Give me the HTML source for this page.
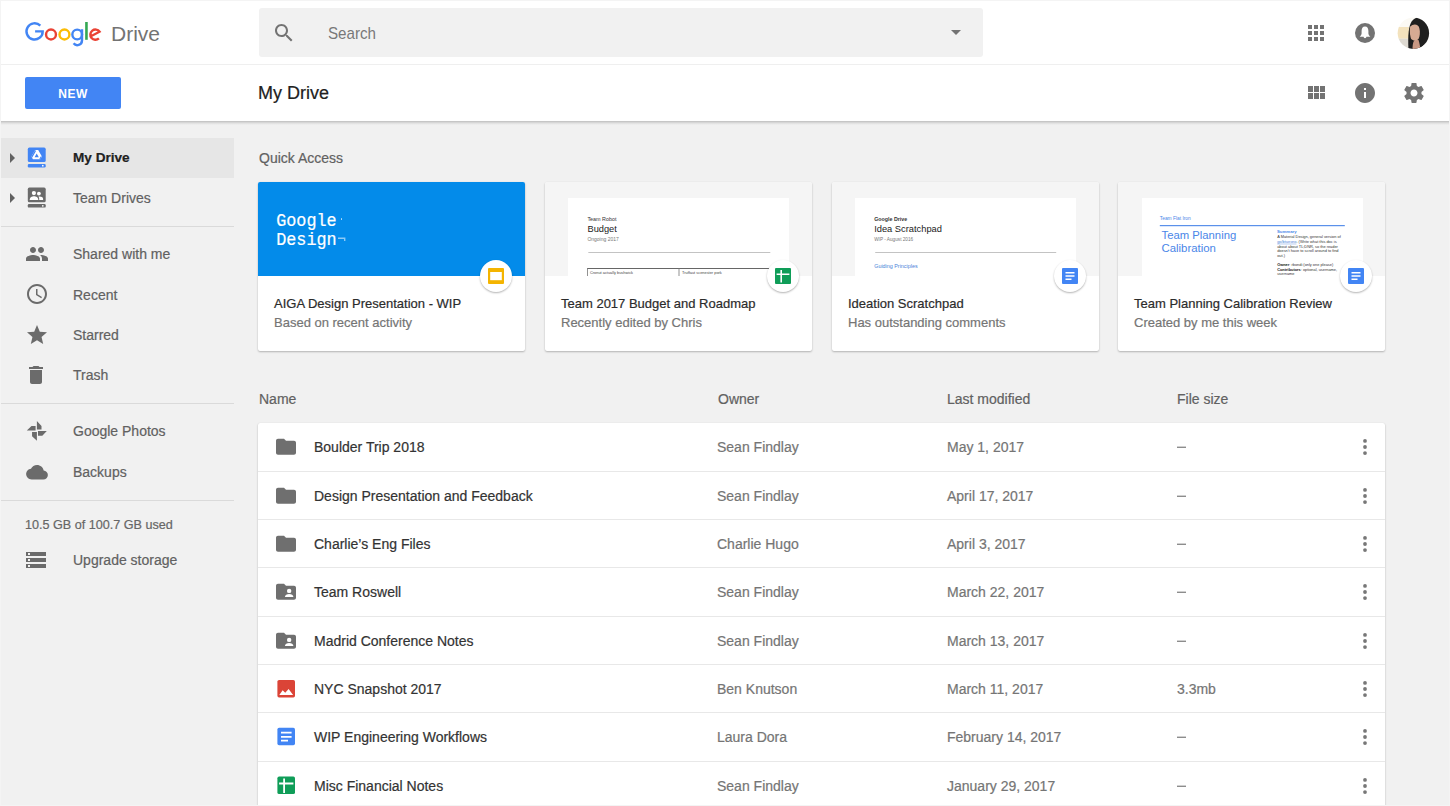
<!DOCTYPE html>
<html><head><meta charset="utf-8">
<style>
*{box-sizing:border-box;margin:0;padding:0}
html,body{width:1450px;height:806px;overflow:hidden}
body{position:relative;background:#f1f1f1;font-family:"Liberation Sans",sans-serif;color:#212121}
.a{position:absolute}
.t{position:absolute;white-space:nowrap;line-height:1;-webkit-text-stroke:.2px currentColor}
svg{position:absolute;overflow:visible}
#hdr{left:0;top:0;width:1450px;height:64px;background:#fff}
#hline{left:0;top:64px;width:1450px;height:1px;background:#efefef}
#bar{left:0;top:65px;width:1450px;height:56px;background:#fff}
#bsh{left:0;top:121px;width:1450px;height:4px;background:linear-gradient(rgba(0,0,0,.21),rgba(0,0,0,.08) 50%,rgba(0,0,0,0))}
#search{left:259px;top:8.4px;width:724px;height:48.3px;background:#f1f1f1;border-radius:3px}
#new{left:25px;top:77px;width:96px;height:32px;background:#4285f4;border-radius:2px;color:#fff;font-weight:bold;font-size:12px;letter-spacing:.5px;text-align:center;line-height:34px}
.side{left:0;width:234px;height:40px}
.side .t{left:73px;font-size:14px;color:#616161;top:13.2px}
.div{height:1px;background:#dadada;left:0;width:234px}
.card{background:#fff;border-radius:2px;box-shadow:0 1px 2px rgba(0,0,0,.25),0 0 1px rgba(0,0,0,.08);width:267px;height:169px;top:182px}
.card .pv{left:0;top:0;width:267px;height:94px;background:#f5f5f5;border-radius:2px 2px 0 0;overflow:hidden}
.card .tt{left:16px;top:115px;font-size:13px;color:#2c2c2c}
.card .st{left:16px;top:134.4px;font-size:13px;color:#757575}
.card .ic{left:222.4px;top:78px;width:32px;height:32px;border-radius:50%;background:#fff;box-shadow:0 1px 2px rgba(0,0,0,.3)}
.page{background:#fff;box-shadow:0 0 2px rgba(0,0,0,.06);top:16px;width:221px;height:90px}
.hd{top:392px;font-size:14px;color:#616161}
#rows{left:258px;top:423px;width:1127px;height:400px;background:#fff;box-shadow:0 1px 2px rgba(0,0,0,.25),0 0 1px rgba(0,0,0,.1);border-radius:2px}
.rl{left:258px;width:1127px;height:1px;background:#e8e8e8}
.row{left:258px;width:1127px;height:48px}
.row .n{left:56px;top:17px;font-size:14px;color:#333}
.row .o{left:459px;top:17px;font-size:14px;color:#757575}
.row .m{left:689px;top:17px;font-size:14px;color:#757575}
.row .s{left:919px;top:17px;font-size:14px;color:#757575}
</style></head><body>
<div class="a" id="hdr"></div>
<div class="a" id="hline"></div>
<div class="a" id="search"></div>
<div class="a" id="bar"></div><div class="a" id="bsh"></div>

<!-- logo -->
<svg style="left:0;top:0" width="200" height="64" viewBox="0 0 200 64">
 <g fill="none" stroke-width="2.4">
  <path d="M40.33 25.67 A8.1 8.1 0 1 0 42.7 31.4 H35.1" stroke="#4285f4"/>
  <circle cx="51" cy="34.5" r="4.95" stroke="#ea4335"/>
  <circle cx="64.45" cy="34.5" r="4.95" stroke="#fbbc05"/>
  <circle cx="77.2" cy="34.5" r="4.85" stroke="#4285f4"/>
  <path d="M82.0 29.2 V40.6 A4.7 4.7 0 0 1 73.6 43.3" stroke="#4285f4"/>
  <path d="M86.45 22 V39.8" stroke="#34a853" stroke-width="2.6"/>
  <path d="M90.9 36.3 L99.6 31.7 A5.1 5.1 0 1 0 98.9 38.4" stroke="#ea4335"/>
 </g>
</svg>
<div class="t" style="left:111px;top:23px;font-size:21px;color:#737373;-webkit-text-stroke:0">Drive</div>

<!-- search -->
<svg style="left:272.3px;top:20.5px" width="24" height="24" viewBox="0 0 24 24"><path fill="#737373" d="M15.5 14h-.79l-.28-.27C15.41 12.59 16 11.11 16 9.5 16 5.91 13.09 3 9.5 3S3 5.91 3 9.5 5.91 16 9.5 16c1.61 0 3.09-.59 4.23-1.57l.27.28v.79l5 4.99L20.49 19l-4.99-5zm-6 0C7.01 14 5 11.99 5 9.5S7.01 5 9.5 5 14 7.01 14 9.5 11.99 14 9.5 14z"/></svg>
<div class="t" style="left:328px;top:24.9px;font-size:16.4px;color:#787878;-webkit-text-stroke:0;transform:scaleX(.925);transform-origin:0 0">Search</div>
<svg style="left:951px;top:30px" width="10" height="5" viewBox="0 0 10 5"><path fill="#737373" d="M0 0h10L5 5z"/></svg>

<!-- header right -->
<svg style="left:1304.4px;top:20.6px" width="24" height="24" viewBox="0 0 24 24"><path fill="#737373" d="M4 8h4V4H4v4zm6 12h4v-4h-4v4zm-6 0h4v-4H4v4zm0-6h4v-4H4v4zm6 0h4v-4h-4v4zm6-10v4h4V4h-4zm-6 4h4V4h-4v4zm6 6h4v-4h-4v4zm0 6h4v-4h-4v4z"/></svg>
<svg style="left:1355px;top:22.5px" width="20" height="20" viewBox="0 0 20 20"><circle cx="10" cy="10" r="10" fill="#737373"/><path fill="#fff" d="M10 3.6C7.6 3.6 6.6 5.6 6.6 8V10.6C6.6 11.8 5.6 12.8 4.7 13.8H15.3C14.4 12.8 13.4 11.8 13.4 10.6V8C13.4 5.6 12.4 3.6 10 3.6zM8.6 13.8A1.4 1.4 0 0 0 11.4 13.8z"/></svg>
<svg style="left:1397px;top:17px" width="33" height="33" viewBox="0 0 33 33">
 <defs><clipPath id="av"><circle cx="16.4" cy="16.2" r="15.7"/></clipPath></defs>
 <g clip-path="url(#av)">
  <rect width="33" height="33" fill="#fbf9f4"/>
  <rect x="0" y="10" width="12.5" height="11.7" fill="#f3e2bd"/>
  <rect x="0" y="21.7" width="12.5" height="11.3" fill="#dedad2"/>
  <path d="M11.5 33C11 24 11 14 13 8C15 2 19 .5 22 .5C29 1.5 33 8 33 17C33 26 29 32 23 33z" fill="#1f1f1f"/>
  <path d="M15.5 33C15.5 28 16 24 18 23L21.5 23C22.5 26 23 29 23.5 33z" fill="#c99883"/>
  <path d="M13.2 9.5C16.5 6 21.5 7 22.6 11.5C23.2 16 22.8 20.5 21 22.5C19 24 15.5 24 14 21.5C12.8 18.5 12.6 12.5 13.2 9.5z" fill="#d6aa93"/>
  <path d="M21.5 7C23 10 23.5 16 22.8 22L24 33L27 33C25.5 24 25.5 13 23.5 7z" fill="#1f1f1f"/>
 </g>
</svg>

<!-- bar 2 -->
<div class="a" id="new">NEW</div>
<div class="t" style="left:258px;top:84px;font-size:18px;color:#212121">My Drive</div>
<svg style="left:1304.4px;top:81px" width="24" height="24" viewBox="0 0 24 24"><path fill="#737373" d="M4 11h5V5H4v6zm0 7h5v-6H4v6zm6 0h5v-6h-5v6zm6 0h5v-6h-5v6zm-6-7h5V5h-5v6zm6-6v6h5V5h-5z"/></svg>
<svg style="left:1353px;top:81px" width="24" height="24" viewBox="0 0 24 24"><path fill="#737373" d="M12 2C6.48 2 2 6.48 2 12s4.48 10 10 10 10-4.48 10-10S17.52 2 12 2zm1 15h-2v-6h2v6zm0-8h-2V7h2v2z"/></svg>
<svg style="left:1401.5px;top:81px" width="24" height="24" viewBox="0 0 24 24"><path fill="#737373" d="M19.43 12.98c.04-.32.07-.64.07-.98s-.03-.66-.07-.98l2.11-1.65c.19-.15.24-.42.12-.64l-2-3.46c-.12-.22-.39-.3-.61-.22l-2.49 1c-.52-.4-1.08-.73-1.69-.98l-.38-2.65C14.46 2.180 14.25 2 14 2h-4c-.25 0-.46.18-.49.42l-.38 2.650c-.61.25-1.170.59-1.69.98l-2.49-1c-.23-.09-.49 0-.61.22l-2 3.46c-.13.22-.07.49.12.64l2.11 1.65c-.04.32-.07.65-.07.98s.03.66.07.98l-2.11 1.65c-.19.15-.24.42-.12.64l2 3.46c.12.22.39.3.61.22l2.49-1c.52.4 1.08.73 1.69.98l.38 2.65c.03.24.24.42.49.42h4c.25 0 .46-.18.49-.42l.38-2.65c.61-.25 1.17-.59 1.69-.98l2.49 1c.23.09.49 0 .61-.22l2-3.46c.12-.22.07-.49-.12-.64l-2.11-1.65zM12 15.5c-1.93 0-3.5-1.57-3.5-3.5s1.57-3.5 3.5-3.5 3.5 1.57 3.5 3.5-1.57 3.5-3.5 3.5z"/></svg>

<!-- sidebar -->
<div class="a side" style="top:137.5px;height:40px;background:#e6e6e6"></div><div class="a side" style="top:137.35px"><div class="t" style="color:#212121;font-weight:bold;font-size:13.6px">My Drive</div></div>
<svg style="left:0px;top:146px" width="24" height="24" viewBox="0 0 24 24"><path fill="#616161" d="M10 17l5-5-5-5v10z"/></svg>
<svg style="left:0;top:0" width="60" height="220" viewBox="0 0 60 220">
<rect x="27.8" y="147.6" width="17.9" height="14.4" rx="1.6" fill="#4285f4"/><rect x="27.8" y="163.9" width="17.9" height="3.6" rx="1.2" fill="#4285f4"/><circle cx="42.8" cy="165.7" r=".85" fill="#fff"/>
<path fill="#fff" fill-rule="evenodd" d="M35.2 150.1H38.2L41.9 156.6L40.4 159.3H32.9L31.4 156.6zM36.7 153.6L34.6 157.3H38.8z"/>
<path fill="#4285f4" d="M35.2 150.1L31.4 156.6L32.1 157.8L35.9 151.3zM41.9 156.6L40.4 159.3H39.2L40.7 156.6z"/>
<path fill="#6b6b6b" d="M0 0"/>
<rect x="27.8" y="187.6" width="17.9" height="14.7" rx="1.6" fill="#6b6b6b"/><rect x="27.8" y="204" width="17.9" height="3.6" rx="1.2" fill="#6b6b6b"/><circle cx="42.8" cy="205.8" r=".85" fill="#fff"/>
<circle cx="33.9" cy="193.1" r="2.1" fill="#fff"/><path fill="#fff" d="M29.7 200C29.7 197.3 32 196.3 34 196.3S38.3 197.3 38.3 200z"/>
<circle cx="38.9" cy="193.6" r="1.9" fill="#fff"/><path fill="#fff" d="M39.2 200V198.6C39.2 197.7 38.9 197.1 38.4 196.7C38.8 196.6 39.3 196.5 39.7 196.5C41.3 196.5 43.1 197.4 43.1 198.7V200z"/>
</svg>
<div class="a side" style="top:177.55px"><div class="t">Team Drives</div></div>
<svg style="left:0px;top:186px" width="24" height="24" viewBox="0 0 24 24"><path fill="#616161" d="M10 17l5-5-5-5v10z"/></svg>

<div class="a div" style="top:226px"></div>
<div class="a side" style="top:233.85px"><div class="t">Shared with me</div></div>
<svg style="left:24.5px;top:241.5px" width="24" height="24" viewBox="0 0 24 24"><path fill="#6b6b6b" d="M16 11c1.66 0 2.99-1.34 2.99-3S17.66 5 16 5c-1.66 0-3 1.34-3 3s1.34 3 3 3zm-8 0c1.66 0 2.99-1.34 2.99-3S9.66 5 8 5C6.34 5 5 6.34 5 8s1.34 3 3 3zm0 2c-2.33 0-7 1.17-7 3.5V19h14v-2.5c0-2.33-4.67-3.5-7-3.5zm8 0c-.29 0-.62.02-.97.05 1.16.84 1.970 1.970 1.97 3.45V19h6v-2.5c0-2.33-4.67-3.5-7-3.5z"/></svg>
<div class="a side" style="top:274.75px"><div class="t">Recent</div></div>
<svg style="left:24.5px;top:282.3px" width="24" height="24" viewBox="0 0 24 24"><path fill="#6b6b6b" d="M11.99 2C6.47 2 2 6.48 2 12s4.47 10 9.99 10C17.52 22 22 17.52 22 12S17.52 2 11.99 2zM12 20c-4.42 0-8-3.58-8-8s3.58-8 8-8 8 3.58 8 8-3.58 8-8 8zm.5-13H11v6l5.25 3.15.75-1.23-4.5-2.67z"/></svg>
<div class="a side" style="top:314.75px"><div class="t">Starred</div></div>
<svg style="left:25px;top:323px" width="24" height="24" viewBox="0 0 24 24"><path fill="#6b6b6b" d="M12 17.27L18.18 21l-1.64-7.03L22 9.24l-7.19-.61L12 2 9.19 8.63 2 9.24l5.46 4.73L5.82 21z"/></svg>
<div class="a side" style="top:354.65px"><div class="t">Trash</div></div>
<svg style="left:24.4px;top:362.8px" width="24" height="24" viewBox="0 0 24 24"><path fill="#6b6b6b" d="M6 19c0 1.1.9 2 2 2h8c1.1 0 2-.9 2-2V7H6v12zM19 4h-3.5l-1-1h-5l-1 1H5v2h14V4z"/></svg>
<div class="a div" style="top:403.3px"></div>
<div class="a side" style="top:411.2px"><div class="t">Google Photos</div></div>
<svg style="left:0;top:0" width="60" height="460" viewBox="0 0 60 460"><path fill="#6b6b6b" d="M36.9 421.1L41.5 425.9V429.6H36.9zM46.8 431.1L42.3 435.8H38V431.1zM36.9 440.8L32.05 436.2V432.1H36.9zM26.8 430.6L31.5 426.1H35.6V430.6z"/></svg>
<div class="a side" style="top:451.6px"><div class="t">Backups</div></div>
<svg style="left:25.8px;top:464.5px" width="22" height="14.5" viewBox="0 4 24 16"><path fill="#6b6b6b" d="M19.35 10.04C18.67 6.59 15.64 4 12 4 9.11 4 6.6 5.64 5.35 8.04 2.34 8.36 0 10.91 0 14c0 3.31 2.69 6 6 6h13c2.76 0 5-2.24 5-5 0-2.64-2.05-4.78-4.650-4.96z"/></svg>
<div class="a div" style="top:500px"></div>
<div class="t" style="left:25px;top:518.9px;font-size:12.6px;color:#666">10.5 GB of 100.7 GB used</div>
<div class="a side" style="top:539.9px"><div class="t">Upgrade storage</div></div>
<svg style="left:24.4px;top:548px" width="24" height="24" viewBox="0 0 24 24"><path fill="#6b6b6b" d="M2 20h20v-4H2v4zm2-3h2v2H4v-2zM2 4v4h20V4H2zm4 3H4V5h2v2zm-4 7h20v-4H2v4zm2-3h2v2H4v-2z"/></svg>

<!-- content -->
<div class="t" style="left:259px;top:150.5px;font-size:14px;color:#616161">Quick Access</div>

<div class="a card" style="left:258px"><div class="a pv" style="background:#038bea">
  <div class="t" style="left:18.2px;top:29.8px;font-family:'Liberation Mono',monospace;font-size:16.8px;color:#fff;line-height:16.55px;transform:scaleY(1.13);transform-origin:0 0">Google<br>Design</div>
  <div class="a" style="left:82.8px;top:36.4px;width:1.4px;height:1.4px;border-radius:50%;background:rgba(255,255,255,.7)"></div>
  <svg style="left:79.5px;top:55.5px" width="8" height="4" viewBox="0 0 8 4"><path d="M0 0.3H6.7V3" fill="none" stroke="rgba(255,255,255,.55)" stroke-width="1.4"/></svg>
 </div>
 <div class="t tt">AIGA Design Presentation - WIP</div><div class="t st">Based on recent activity</div>
 <div class="a ic"><svg style="left:8px;top:8px" width="16" height="16" viewBox="0 0 16 16"><rect width="16" height="16" rx="1" fill="#f4b400"/><rect x="2.2" y="4" width="11.6" height="8.2" fill="#fff"/></svg></div>
</div>
<div class="a card" style="left:545px"><div class="a pv"><svg style="left:0;top:0" width="267" height="94" viewBox="545 182 267 94"><rect x="568" y="198" width="221" height="80" fill="#fff"/>
<g style="font-family:'Liberation Sans',sans-serif">
<text x="587.4" y="220.9" font-size="5.4" fill="#333">Team Robot</text>
<text x="587.5" y="232.4" font-size="9.25" fill="#212121">Budget</text>
<text x="587.4" y="240.8" font-size="5" fill="#777">Ongoing 2017</text>
<rect x="588.3" y="252.2" width="182" height=".7" fill="#aaa"/>
<rect x="587.2" y="268" width="183" height="1" fill="#666"/>
<rect x="587.2" y="268" width=".8" height="10" fill="#777"/>
<rect x="678.6" y="268" width=".8" height="10" fill="#777"/>
<rect x="769.6" y="268" width=".8" height="10" fill="#777"/>
<text x="590" y="274.2" font-size="3.9" fill="#444">Cronut actually bushwick</text>
<text x="682" y="274.2" font-size="3.9" fill="#444">Truffaut scenester pork</text>
</g></svg></div>
 <div class="t tt">Team 2017 Budget and Roadmap</div><div class="t st">Recently edited by Chris</div>
 <div class="a ic"><svg style="left:8px;top:8px" width="16" height="16" viewBox="0 0 16 16"><rect width="16" height="16" rx="1" fill="#0f9d58"/><path fill="#fff" d="M1.6 5.4h12.8v1.6H1.6zM5.4 2h1.6v12.4H5.4z"/></svg></div>
</div>
<div class="a card" style="left:832px"><div class="a pv"><svg style="left:0;top:0" width="267" height="94" viewBox="832 182 267 94"><rect x="855" y="198" width="221" height="80" fill="#fff"/>
<g style="font-family:'Liberation Sans',sans-serif">
<text x="874.2" y="220.9" font-size="5.3" fill="#333" font-weight="bold">Google Drive</text>
<text x="874.2" y="232.4" font-size="9.3" fill="#212121">Idea Scratchpad</text>
<text x="874.2" y="240.8" font-size="4.7" fill="#777">WIP - August 2016</text>
<rect x="875.2" y="252.2" width="181" height=".7" fill="#aaa"/>
<text x="874.2" y="267.8" font-size="5.4" fill="#4a7fd8">Guiding Principles</text>
</g></svg></div>
 <div class="t tt">Ideation Scratchpad</div><div class="t st">Has outstanding comments</div>
 <div class="a ic"><svg style="left:8px;top:8px" width="16" height="16" viewBox="0 0 16 16"><rect width="16" height="16" rx="1" fill="#4285f4"/><path fill="#fff" d="M3.5 4h9v1.6h-9zM3.5 7.2h9v1.6h-9zM3.5 10.4h6v1.6h-6z"/></svg></div>
</div>
<div class="a card" style="left:1118px"><div class="a pv"><svg style="left:0;top:0" width="267" height="94" viewBox="1118 182 267 94"><rect x="1142" y="198" width="221" height="80" fill="#fff"/>
<g style="font-family:'Liberation Sans',sans-serif">
<text x="1159.8" y="219.6" font-size="4.85" fill="#4a86e8">Team Flat Iron</text>
<rect x="1159.8" y="225.1" width="185" height="1.1" fill="#4a86e8"/>
<text x="1161.5" y="238.7" font-size="11.3" fill="#4a86e8">Team Planning</text>
<text x="1161.5" y="251.8" font-size="11.4" fill="#4a86e8">Calibration</text>
<text x="1277" y="233.2" font-size="4.3" font-weight="bold" fill="#4a86e8">Summary</text>
<text x="1277.2" y="238" font-size="3.9" fill="#333">A Material Design, general version of</text><text x="1277.2" y="242.8" font-size="3.9" fill="#333"><tspan fill="#4a7fd8" text-decoration="underline">go/btuesno</tspan>. (Write what this doc is</text><text x="1277.2" y="247.6" font-size="3.9" fill="#333">about about TL;DNR, so the reader</text><text x="1277.2" y="252.4" font-size="3.9" fill="#333">doesn't have to scroll around to find</text><text x="1277.2" y="257.2" font-size="3.9" fill="#333">out.)</text><text x="1277.2" y="265.8" font-size="3.9" fill="#333"><tspan font-weight="bold" fill="#111">Owner</tspan>: rbondi (only one please)</text><text x="1277.2" y="270.6" font-size="3.9" fill="#333"><tspan font-weight="bold" fill="#111">Contributors</tspan>: optional, username,</text><text x="1277.2" y="275.4" font-size="3.9" fill="#333">username</text></g></svg></div>
 <div class="t tt">Team Planning Calibration Review</div><div class="t st">Created by me this week</div>
 <div class="a ic"><svg style="left:8px;top:8px" width="16" height="16" viewBox="0 0 16 16"><rect width="16" height="16" rx="1" fill="#4285f4"/><path fill="#fff" d="M3.5 4h9v1.6h-9zM3.5 7.2h9v1.6h-9zM3.5 10.4h6v1.6h-6z"/></svg></div>
</div>

<div class="t hd" style="left:259px">Name</div>
<div class="t hd" style="left:718px">Owner</div>
<div class="t hd" style="left:947px">Last modified</div>
<div class="t hd" style="left:1177px">File size</div>

<div class="a" id="rows"></div>
<div class="a rl" style="top:470.50px"></div>
<div class="a rl" style="top:518.86px"></div>
<div class="a rl" style="top:567.22px"></div>
<div class="a rl" style="top:615.58px"></div>
<div class="a rl" style="top:663.94px"></div>
<div class="a rl" style="top:712.30px"></div>
<div class="a rl" style="top:760.66px"></div>
<div class="a row" style="top:423.15px"><svg style="left:0;top:0" width="1127" height="48" viewBox="258 0 1127 48"><g transform="translate(274 11.85)"><path fill="#6f6f6f" d="M10 4H4c-1.1 0-1.99.9-1.99 2L2 18c0 1.1.9 2 2 2h16c1.1 0 2-.9 2-2V8c0-1.1-.9-2-2-2h-8l-2-2z"/></g><rect x="1177" y="23.65" width="9" height="1.2" fill="#7a7a7a"/><circle cx="1365" cy="17.9" r="1.9" fill="#777"/><circle cx="1365" cy="24" r="1.9" fill="#777"/><circle cx="1365" cy="30.1" r="1.9" fill="#777"/></svg><div class="t n">Boulder Trip 2018</div><div class="t o">Sean Findlay</div><div class="t m">May 1, 2017</div></div>
<div class="a row" style="top:471.51px"><svg style="left:0;top:0" width="1127" height="48" viewBox="258 0 1127 48"><g transform="translate(274 11.85)"><path fill="#6f6f6f" d="M10 4H4c-1.1 0-1.99.9-1.99 2L2 18c0 1.1.9 2 2 2h16c1.1 0 2-.9 2-2V8c0-1.1-.9-2-2-2h-8l-2-2z"/></g><rect x="1177" y="23.65" width="9" height="1.2" fill="#7a7a7a"/><circle cx="1365" cy="17.9" r="1.9" fill="#777"/><circle cx="1365" cy="24" r="1.9" fill="#777"/><circle cx="1365" cy="30.1" r="1.9" fill="#777"/></svg><div class="t n">Design Presentation and Feedback</div><div class="t o">Sean Findlay</div><div class="t m">April 17, 2017</div></div>
<div class="a row" style="top:519.87px"><svg style="left:0;top:0" width="1127" height="48" viewBox="258 0 1127 48"><g transform="translate(274 11.85)"><path fill="#6f6f6f" d="M10 4H4c-1.1 0-1.99.9-1.99 2L2 18c0 1.1.9 2 2 2h16c1.1 0 2-.9 2-2V8c0-1.1-.9-2-2-2h-8l-2-2z"/></g><rect x="1177" y="23.65" width="9" height="1.2" fill="#7a7a7a"/><circle cx="1365" cy="17.9" r="1.9" fill="#777"/><circle cx="1365" cy="24" r="1.9" fill="#777"/><circle cx="1365" cy="30.1" r="1.9" fill="#777"/></svg><div class="t n">Charlie’s Eng Files</div><div class="t o">Charlie Hugo</div><div class="t m">April 3, 2017</div></div>
<div class="a row" style="top:568.23px"><svg style="left:0;top:0" width="1127" height="48" viewBox="258 0 1127 48"><g transform="translate(274 11.85)"><path fill="#6f6f6f" d="M10 4H4c-1.1 0-1.99.9-1.99 2L2 18c0 1.1.9 2 2 2h16c1.1 0 2-.9 2-2V8c0-1.1-.9-2-2-2h-8l-2-2z"/></g><circle cx="289.15" cy="22.9" r="2.2" fill="#fff"/><path fill="#fff" d="M284.9 29.1C284.9 26.9 287 25.9 289.15 25.9S293.4 26.9 293.4 29.1z"/><rect x="1177" y="23.65" width="9" height="1.2" fill="#7a7a7a"/><circle cx="1365" cy="17.9" r="1.9" fill="#777"/><circle cx="1365" cy="24" r="1.9" fill="#777"/><circle cx="1365" cy="30.1" r="1.9" fill="#777"/></svg><div class="t n">Team Roswell</div><div class="t o">Sean Findlay</div><div class="t m">March 22, 2017</div></div>
<div class="a row" style="top:616.59px"><svg style="left:0;top:0" width="1127" height="48" viewBox="258 0 1127 48"><g transform="translate(274 11.85)"><path fill="#6f6f6f" d="M10 4H4c-1.1 0-1.99.9-1.99 2L2 18c0 1.1.9 2 2 2h16c1.1 0 2-.9 2-2V8c0-1.1-.9-2-2-2h-8l-2-2z"/></g><circle cx="289.15" cy="22.9" r="2.2" fill="#fff"/><path fill="#fff" d="M284.9 29.1C284.9 26.9 287 25.9 289.15 25.9S293.4 26.9 293.4 29.1z"/><rect x="1177" y="23.65" width="9" height="1.2" fill="#7a7a7a"/><circle cx="1365" cy="17.9" r="1.9" fill="#777"/><circle cx="1365" cy="24" r="1.9" fill="#777"/><circle cx="1365" cy="30.1" r="1.9" fill="#777"/></svg><div class="t n">Madrid Conference Notes</div><div class="t o">Sean Findlay</div><div class="t m">March 13, 2017</div></div>
<div class="a row" style="top:664.95px"><svg style="left:0;top:0" width="1127" height="48" viewBox="258 0 1127 48"><rect x="277.4" y="14.9" width="17.6" height="17.6" rx="1.7" fill="#db4437"/><path fill="#fff" d="M279.3 30.05L282.65 25.15 285.25 27.75 288.6 24.05 293.1 30.05z"/><circle cx="1365" cy="17.9" r="1.9" fill="#777"/><circle cx="1365" cy="24" r="1.9" fill="#777"/><circle cx="1365" cy="30.1" r="1.9" fill="#777"/></svg><div class="t n">NYC Snapshot 2017</div><div class="t o">Ben Knutson</div><div class="t m">March 11, 2017</div><div class="t s">3.3mb</div></div>
<div class="a row" style="top:713.31px"><svg style="left:0;top:0" width="1127" height="48" viewBox="258 0 1127 48"><rect x="277.4" y="14.7" width="17.6" height="17.6" rx="1.7" fill="#4285f4"/><path fill="#fff" d="M281 18.85h10.6v1.7H281zM281 22.95h10.6v1.7H281zM281 26.85h7v1.7h-7z"/><rect x="1177" y="23.65" width="9" height="1.2" fill="#7a7a7a"/><circle cx="1365" cy="17.9" r="1.9" fill="#777"/><circle cx="1365" cy="24" r="1.9" fill="#777"/><circle cx="1365" cy="30.1" r="1.9" fill="#777"/></svg><div class="t n">WIP Engineering Workflows</div><div class="t o">Laura Dora</div><div class="t m">February 14, 2017</div></div>
<div class="a row" style="top:761.67px"><svg style="left:0;top:0" width="1127" height="48" viewBox="258 0 1127 48"><rect x="277.4" y="14.5" width="17.6" height="17.6" rx="1.7" fill="#0f9d58"/><path fill="#fff" d="M279.1 20.6h14.3v1.8H279.1zM283.2 16.5h1.8v14.5h-1.8z"/><rect x="1177" y="23.65" width="9" height="1.2" fill="#7a7a7a"/><circle cx="1365" cy="17.9" r="1.9" fill="#777"/><circle cx="1365" cy="24" r="1.9" fill="#777"/><circle cx="1365" cy="30.1" r="1.9" fill="#777"/></svg><div class="t n">Misc Financial Notes</div><div class="t o">Sean Findlay</div><div class="t m">January 29, 2017</div></div>
<div class="a" style="left:0;top:0;width:1450px;height:806px;border:1px solid #f4f4f4;pointer-events:none"></div>
</body></html>
